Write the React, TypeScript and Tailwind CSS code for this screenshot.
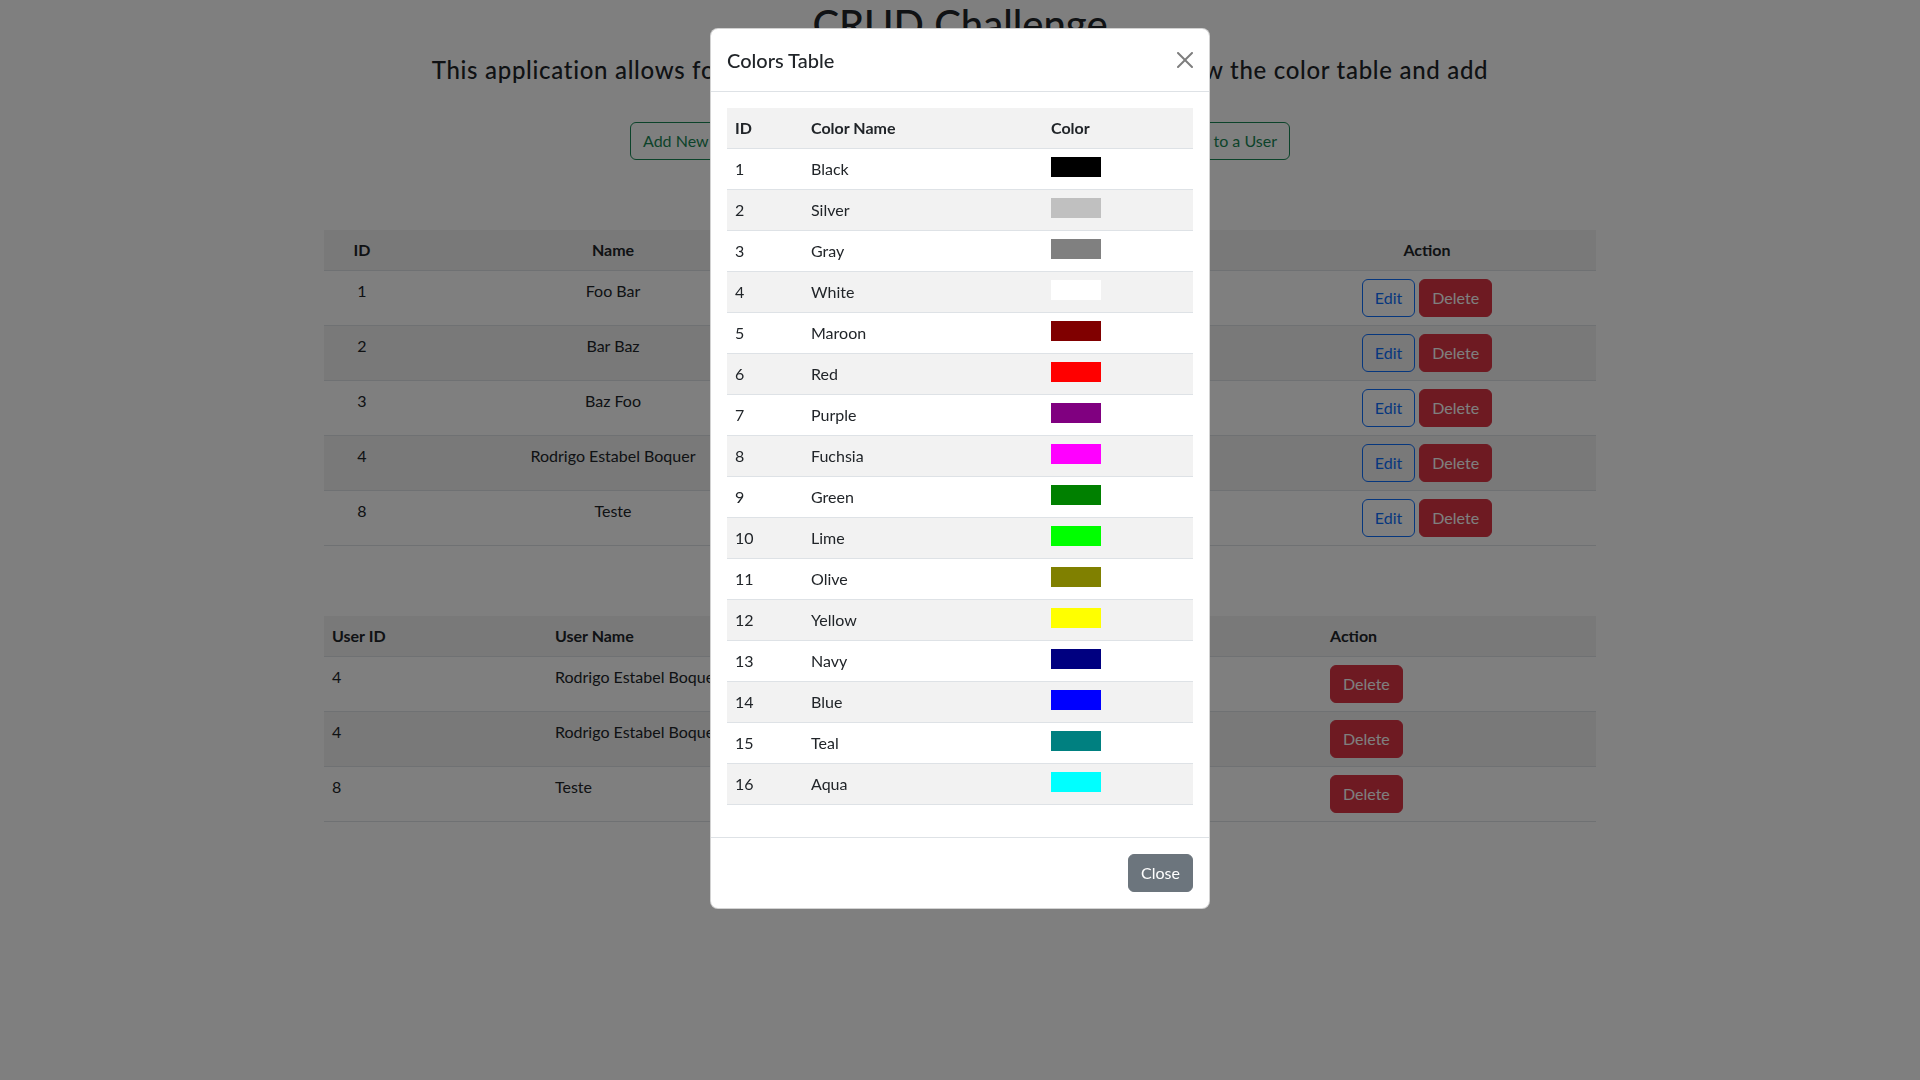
import React from "react";

const users = [
  { id: 1, name: "Foo Bar", email: "foo@bar.com" },
  { id: 2, name: "Bar Baz", email: "bar@baz.com" },
  { id: 3, name: "Baz Foo", email: "baz@foo.com" },
  { id: 4, name: "Rodrigo Estabel Boquer", email: "rodrigo@email.com" },
  { id: 8, name: "Teste", email: "teste@teste.com" },
];

const userColors = [
  { id: 4, name: "Rodrigo Estabel Boquer", color: "Red" },
  { id: 4, name: "Rodrigo Estabel Boquer", color: "Blue" },
  { id: 8, name: "Teste", color: "Green" },
];

const colors = [
  { id: 1, name: "Black", hex: "#000000" },
  { id: 2, name: "Silver", hex: "#c0c0c0" },
  { id: 3, name: "Gray", hex: "#808080" },
  { id: 4, name: "White", hex: "#ffffff" },
  { id: 5, name: "Maroon", hex: "#800000" },
  { id: 6, name: "Red", hex: "#ff0000" },
  { id: 7, name: "Purple", hex: "#800080" },
  { id: 8, name: "Fuchsia", hex: "#ff00ff" },
  { id: 9, name: "Green", hex: "#008000" },
  { id: 10, name: "Lime", hex: "#00ff00" },
  { id: 11, name: "Olive", hex: "#808000" },
  { id: 12, name: "Yellow", hex: "#ffff00" },
  { id: 13, name: "Navy", hex: "#000080" },
  { id: 14, name: "Blue", hex: "#0000ff" },
  { id: 15, name: "Teal", hex: "#008080" },
  { id: 16, name: "Aqua", hex: "#00ffff" },
];

const btnBase =
  "inline-block rounded-[6px] border px-3 py-[6px] text-[16px] leading-6 whitespace-nowrap";

function OutlineSuccess({ children }: { children: React.ReactNode }) {
  return (
    <button className={`${btnBase} border-[#198754] text-[#198754] bg-transparent`}>
      {children}
    </button>
  );
}

function EditBtn() {
  return (
    <button className={`${btnBase} border-[#0d6efd] text-[#0d6efd] bg-transparent`}>
      Edit
    </button>
  );
}

function DeleteBtn() {
  return (
    <button className={`${btnBase} border-[#dc3545] bg-[#dc3545] text-white`}>
      Delete
    </button>
  );
}

function CloseIcon() {
  return (
    <svg width="16" height="16" viewBox="0 0 16 16" className="opacity-50">
      <path
        fill="#000"
        d="M.293.293a1 1 0 0 1 1.414 0L8 6.586 14.293.293a1 1 0 1 1 1.414 1.414L9.414 8l6.293 6.293a1 1 0 0 1-1.414 1.414L8 9.414l-6.293 6.293a1 1 0 0 1-1.414-1.414L6.586 8 .293 1.707a1 1 0 0 1 0-1.414z"
      />
    </svg>
  );
}

export default function App() {
  const th = "px-2 py-2 border-b border-[#dee2e6] font-bold";
  const td = "px-2 py-2 border-b border-[#dee2e6] align-top";
  return (
    <div className="relative min-h-screen w-full bg-white font-['Lato',sans-serif] text-[16px] leading-6 text-[#212529]">
      <main className="pb-10">
        <h1 className="mb-2 text-center text-[40px] font-medium leading-[48px]">CRUD Challenge</h1>
        <h4 className="mb-2 text-center text-[24px] font-medium leading-[28.8px] tracking-[0.7px]">
          This application allows for the management of users. You can also view the color table and add
          <br />
          colors to a user.
        </h4>
        <div className="mx-auto flex w-[660px] justify-between">
          <OutlineSuccess>Add New User</OutlineSuccess>
          <OutlineSuccess>Show Colors Table</OutlineSuccess>
          <OutlineSuccess>Add Color to a User</OutlineSuccess>
        </div>

        <div className="mx-auto mt-[70px] w-[1272px]">
          <table className="w-full table-fixed border-collapse text-center">
            <colgroup>
              <col className="w-[76px]" />
              <col className="w-[426px]" />
              <col className="w-[432px]" />
              <col className="w-[338px]" />
            </colgroup>
            <thead>
              <tr className="bg-[#f2f2f2]">
                <th className={th}>ID</th>
                <th className={th}>Name</th>
                <th className={th}>Email</th>
                <th className={th}>Action</th>
              </tr>
            </thead>
            <tbody>
              {users.map((u, i) => (
                <tr key={u.id} className={i % 2 === 1 ? "bg-[#f2f2f2]" : "bg-white"}>
                  <td className={td}>{u.id}</td>
                  <td className={td}>{u.name}</td>
                  <td className={td}>{u.email}</td>
                  <td className={td}>
                    <div className="flex justify-center gap-1">
                      <EditBtn />
                      <DeleteBtn />
                    </div>
                  </td>
                </tr>
              ))}
            </tbody>
          </table>

          <table className="mt-[70px] w-full table-fixed border-collapse text-left">
            <colgroup>
              <col className="w-[223px]" />
              <col className="w-[387px]" />
              <col className="w-[388px]" />
              <col className="w-[274px]" />
            </colgroup>
            <thead>
              <tr className="bg-[#f2f2f2]">
                <th className={th}>User ID</th>
                <th className={th}>User Name</th>
                <th className={th}>Color</th>
                <th className={th}>Action</th>
              </tr>
            </thead>
            <tbody>
              {userColors.map((u, i) => (
                <tr key={i} className={i % 2 === 1 ? "bg-[#f2f2f2]" : "bg-white"}>
                  <td className={td}>{u.id}</td>
                  <td className={`${td} whitespace-nowrap`}>{u.name}</td>
                  <td className={td}>{u.color}</td>
                  <td className={td}>
                    <div className="flex">
                      <DeleteBtn />
                    </div>
                  </td>
                </tr>
              ))}
            </tbody>
          </table>
        </div>
      </main>

      <div className="fixed inset-0 flex items-start justify-center bg-black/50 pt-[28px]">
        <div className="w-[500px] rounded-[8px] border border-black/[.175] bg-white">
          <div className="flex items-center justify-between border-b border-[#dee2e6] p-4">
            <h5 className="text-[20px] font-medium leading-[30px]">Colors Table</h5>
            <button className="-m-2 flex h-8 w-8 items-center justify-center p-2">
              <CloseIcon />
            </button>
          </div>
          <div className="p-4">
            <table className="mb-4 w-full table-fixed border-collapse text-left">
              <colgroup>
                <col className="w-[76px]" />
                <col className="w-[240px]" />
                <col className="w-[150px]" />
              </colgroup>
              <thead>
                <tr className="bg-[#f2f2f2]">
                  <th className={th}>ID</th>
                  <th className={th}>Color Name</th>
                  <th className={th}>Color</th>
                </tr>
              </thead>
              <tbody>
                {colors.map((c, i) => (
                  <tr key={c.id} className={i % 2 === 1 ? "bg-[#f2f2f2]" : "bg-white"}>
                    <td className={td}>{c.id}</td>
                    <td className={td}>{c.name}</td>
                    <td className={td}>
                      <div className="h-[20px] w-[50px]" style={{ backgroundColor: c.hex }} />
                    </td>
                  </tr>
                ))}
              </tbody>
            </table>
          </div>
          <div className="flex justify-end border-t border-[#dee2e6] p-3">
            <button className={`${btnBase} m-1 border-[#6c757d] bg-[#6c757d] text-white`}>Close</button>
          </div>
        </div>
      </div>
    </div>
  );
}
